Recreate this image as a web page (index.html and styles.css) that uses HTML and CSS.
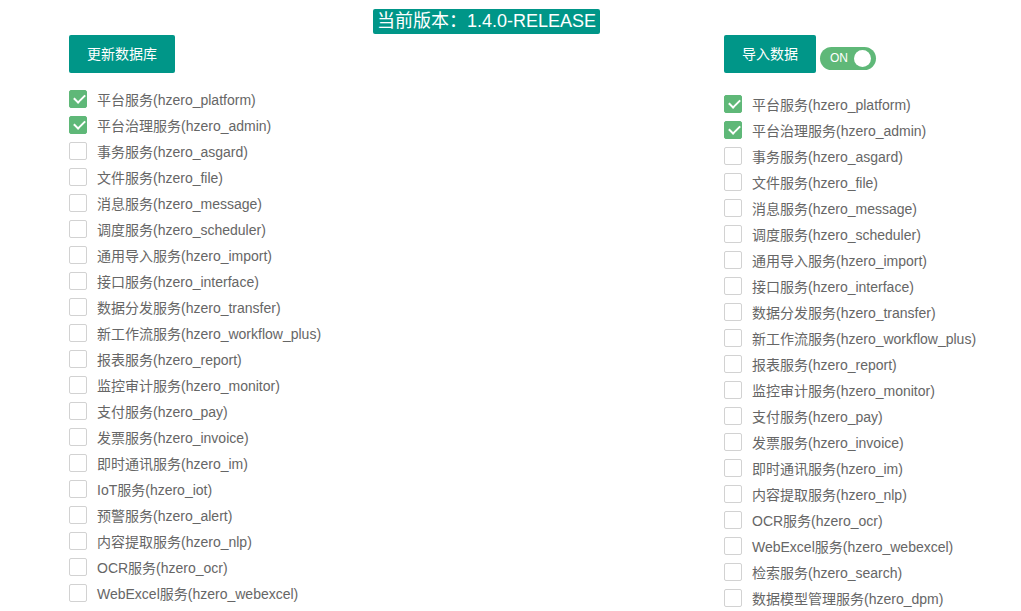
FILE: index.html
```html
<!DOCTYPE html>
<html lang="zh">
<head>
<meta charset="utf-8">
<link rel="stylesheet" href="styles.css">
</head>
<body>
<div class="header"><span class="version">当前版本：1.4.0-RELEASE</span></div>
<div class="columns">
  <div class="col col-left">
    <div class="toolbar"><button class="btn">更新数据库</button></div>
    <ul class="list">
      <li><span class="cb on"></span>平台服务(hzero_platform)</li>
      <li><span class="cb on"></span>平台治理服务(hzero_admin)</li>
      <li><span class="cb"></span>事务服务(hzero_asgard)</li>
      <li><span class="cb"></span>文件服务(hzero_file)</li>
      <li><span class="cb"></span>消息服务(hzero_message)</li>
      <li><span class="cb"></span>调度服务(hzero_scheduler)</li>
      <li><span class="cb"></span>通用导入服务(hzero_import)</li>
      <li><span class="cb"></span>接口服务(hzero_interface)</li>
      <li><span class="cb"></span>数据分发服务(hzero_transfer)</li>
      <li><span class="cb"></span>新工作流服务(hzero_workflow_plus)</li>
      <li><span class="cb"></span>报表服务(hzero_report)</li>
      <li><span class="cb"></span>监控审计服务(hzero_monitor)</li>
      <li><span class="cb"></span>支付服务(hzero_pay)</li>
      <li><span class="cb"></span>发票服务(hzero_invoice)</li>
      <li><span class="cb"></span>即时通讯服务(hzero_im)</li>
      <li><span class="cb"></span>IoT服务(hzero_iot)</li>
      <li><span class="cb"></span>预警服务(hzero_alert)</li>
      <li><span class="cb"></span>内容提取服务(hzero_nlp)</li>
      <li><span class="cb"></span>OCR服务(hzero_ocr)</li>
      <li><span class="cb"></span>WebExcel服务(hzero_webexcel)</li>
    </ul>
  </div>
  <div class="col col-right">
    <div class="toolbar"><button class="btn">导入数据</button><span class="switch"><em>ON</em><i></i></span></div>
    <ul class="list list-right">
      <li><span class="cb on"></span>平台服务(hzero_platform)</li>
      <li><span class="cb on"></span>平台治理服务(hzero_admin)</li>
      <li><span class="cb"></span>事务服务(hzero_asgard)</li>
      <li><span class="cb"></span>文件服务(hzero_file)</li>
      <li><span class="cb"></span>消息服务(hzero_message)</li>
      <li><span class="cb"></span>调度服务(hzero_scheduler)</li>
      <li><span class="cb"></span>通用导入服务(hzero_import)</li>
      <li><span class="cb"></span>接口服务(hzero_interface)</li>
      <li><span class="cb"></span>数据分发服务(hzero_transfer)</li>
      <li><span class="cb"></span>新工作流服务(hzero_workflow_plus)</li>
      <li><span class="cb"></span>报表服务(hzero_report)</li>
      <li><span class="cb"></span>监控审计服务(hzero_monitor)</li>
      <li><span class="cb"></span>支付服务(hzero_pay)</li>
      <li><span class="cb"></span>发票服务(hzero_invoice)</li>
      <li><span class="cb"></span>即时通讯服务(hzero_im)</li>
      <li><span class="cb"></span>内容提取服务(hzero_nlp)</li>
      <li><span class="cb"></span>OCR服务(hzero_ocr)</li>
      <li><span class="cb"></span>WebExcel服务(hzero_webexcel)</li>
      <li><span class="cb"></span>检索服务(hzero_search)</li>
      <li><span class="cb"></span>数据模型管理服务(hzero_dpm)</li>
    </ul>
  </div>
</div>
</body>
</html>
```
FILE: styles.css
```css
* { box-sizing: border-box; }
html, body { margin: 0; padding: 0; background: #fff; }
body {
  font-family: "Liberation Sans", "Noto Sans CJK SC", sans-serif;
  font-size: 14px;
  color: #666;
  overflow: hidden;
}
.header {
  padding-top: 9px;
  padding-left: 373px;
  height: 35px;
}
.version {
  display: inline-block;
  height: 25px;
  line-height: 25px;
  padding: 0 4px;
  background: #009688;
  color: #fff;
  font-size: 18px;
  border-radius: 2px;
  white-space: nowrap;
}
.columns {
  display: flex;
  padding-left: 69px;
}
.col-left { width: 655px; }
.toolbar {
  display: flex;
  align-items: center;
  gap: 4px;
  height: 38px;
}
.btn {
  height: 38px;
  padding: 0 18px;
  border: 0;
  border-radius: 2px;
  background: #009688;
  color: #fff;
  font-family: inherit;
  font-size: 14px;
  line-height: 38px;
  cursor: pointer;
}
.switch {
  position: relative;
  display: inline-flex;
  align-items: center;
  width: 56px;
  height: 23px;
  margin-top: 8px;
  border-radius: 12px;
  background: #5FB878;
  padding-left: 10px;
}
.switch em {
  font-style: normal;
  font-size: 12px;
  color: #fff;
  line-height: 1;
}
.switch i {
  position: absolute;
  right: 5px;
  top: 3px;
  width: 17px;
  height: 17px;
  border-radius: 50%;
  background: #fff;
}
.list {
  list-style: none;
  margin: 0;
  padding: 13px 0 0 0;
}
.list-right { padding-top: 18px; }
.list li {
  display: flex;
  align-items: center;
  height: 26px;
  white-space: nowrap;
}
.cb {
  position: relative;
  flex: none;
  width: 18px;
  height: 18px;
  margin-right: 10px;
  border: 1px solid #d2d2d2;
  border-radius: 2px;
  background: #fff;
}
.cb.on {
  background: #5FB878;
  border-color: #5FB878;
}
.cb.on::after {
  content: "";
  position: absolute;
  left: 4px;
  top: 3px;
  width: 9px;
  height: 5px;
  border-left: 2px solid #fff;
  border-bottom: 2px solid #fff;
  transform: rotate(-45deg);
}
```
